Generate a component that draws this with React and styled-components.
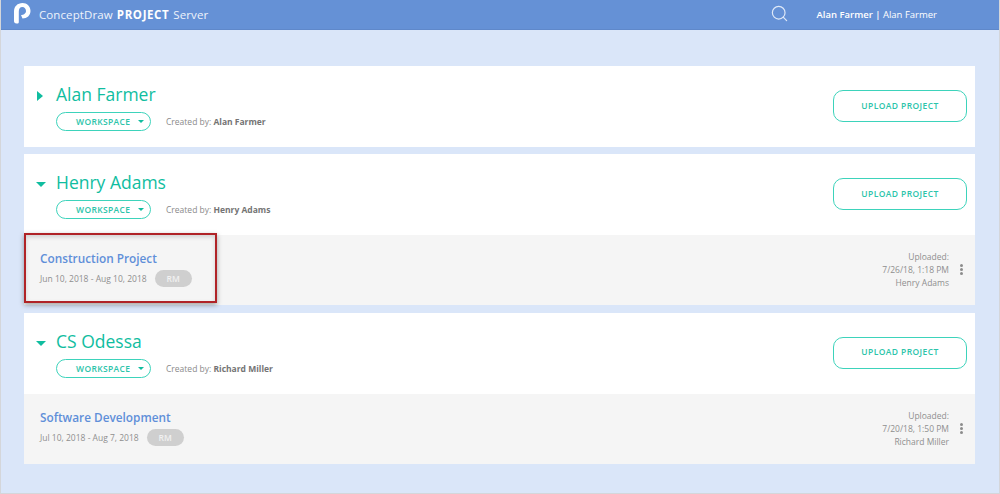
import React from 'react';
import styled, { createGlobalStyle } from 'styled-components';
import { Search } from 'lucide-react';

const Global = createGlobalStyle`
  html, body { margin: 0; padding: 0; }
  body { font-family: "Open Sans", sans-serif; background: #dae6f9; }
`;

const Page = styled.div`
  width: 1000px;
  height: 494px;
  box-sizing: border-box;
  border: 1px solid #d4d6da;
  border-top: 0;
  background: #dae6f9;
  overflow: hidden;
`;

const Header = styled.header`
  height: 30px;
  box-sizing: border-box;
  margin: 0 -1px;
  background: #6591d6;
  border-bottom: 1px solid #5f88ca;
  display: flex;
  align-items: center;
  color: #fff;
`;

const Logo = styled.svg`
  width: 18px;
  height: 22px;
  margin-left: 13px;
  margin-top: -3px;
`;

const Brand = styled.div`
  margin-left: 8px;
  font-size: 11.5px;
  letter-spacing: 0.1px;
  color: #eef3fb;
  b { font-weight: 700; letter-spacing: 0.6px; margin: 0 1px; color: #fff; }
`;

const SearchIcon = styled(Search)`
  margin-left: auto;
  margin-top: -3px;
  color: #dfe9f8;
`;

const UserName = styled.div`
  margin-left: 28px;
  margin-right: 63px;
  font-size: 9.5px;
  color: #fff;
  font-weight: 600;
  margin-top: -1px;
  white-space: pre;
  span { font-weight: 400; }
`;

const List = styled.main`
  position: relative;
  display: flex;
  flex-direction: column;
  gap: 7.4px;
  padding: 36px 24px 0 23px;
`;

const Card = styled.section`
  background: #fff;
`;

const CardHead = styled.div`
  height: 81px;
  box-sizing: border-box;
  display: flex;
  align-items: flex-start;
  padding: 16px 8px 0 12px;
`;

const Caret = styled.i`
  width: 0;
  height: 0;
  flex: none;
  margin-top: ${p => (p.$open ? '12px' : '9px')};
  margin-left: ${p => (p.$open ? '0' : '1px')};
  margin-right: ${p => (p.$open ? '10px' : '13px')};
  border-style: solid;
  ${p => (p.$open
    ? 'border-width: 5px 5px 0 5px; border-color: #10bd9f transparent transparent transparent;'
    : 'border-width: 5px 0 5px 6px; border-color: transparent transparent transparent #10bd9f;')}
`;

const HeadBody = styled.div`
  flex: 1;
`;

const Title = styled.h2`
  margin: -1px 0 1px;
  font-size: 17.5px;
  line-height: 26px;
  font-weight: 400;
  color: #10bd9f;
`;

const Meta = styled.div`
  display: flex;
  align-items: center;
  margin-top: 5px;
`;

const Workspace = styled.button`
  width: 95px;
  height: 19px;
  box-sizing: border-box;
  border: 1px solid #3dd3bb;
  border-radius: 10px;
  background: #fff;
  padding: 0 0 0 19px;
  display: flex;
  align-items: center;
  font-family: inherit;
  font-size: 8.5px;
  font-weight: 600;
  letter-spacing: 0.35px;
  color: #2cc4aa;
  &::after {
    content: "";
    margin-left: 8px;
    border-style: solid;
    border-width: 3px 3px 0 3px;
    border-color: #10bd9f transparent transparent transparent;
  }
`;

const CreatedBy = styled.div`
  margin-left: 15px;
  font-size: 8.5px;
  color: #8a8a8a;
  b { color: #747474; font-weight: 700; }
`;

const UploadButton = styled.button`
  width: 134px;
  height: 32px;
  margin-top: 8px;
  padding: 0 0 2px;
  box-sizing: border-box;
  border: 1px solid #3dd3bb;
  border-radius: 10px;
  background: #fff;
  font-family: inherit;
  font-size: 8.5px;
  font-weight: 600;
  letter-spacing: 0.4px;
  color: #2cc4aa;
`;

const ProjectRow = styled.div`
  height: 70px;
  box-sizing: border-box;
  background: #f5f5f5;
  display: flex;
  justify-content: space-between;
  padding: 15px 10px 0 16px;
`;

const ProjectName = styled.div`
  font-size: 11.8px;
  line-height: 17px;
  font-weight: 600;
  color: #5f8fd9;
`;

const Dates = styled.div`
  display: flex;
  align-items: center;
  margin-top: 3px;
  font-size: 8.5px;
  color: #8f8f8f;
`;

const Initials = styled.span`
  width: 37px;
  height: 17px;
  margin-left: 8px;
  border-radius: 9px;
  background: #cfcfcf;
  color: #f1f1f1;
  font-size: 8.5px;
  font-weight: 600;
  display: flex;
  align-items: center;
  justify-content: center;
`;

const UploadedInfo = styled.div`
  display: flex;
  align-items: center;
  font-size: 8.5px;
  line-height: 13px;
  text-align: right;
  color: #8f8f8f;
  height: 39px;
`;

const Dots = styled.span`
  display: flex;
  flex-direction: column;
  gap: 1px;
  margin-left: 11px;
  margin-right: 2px;
  i { width: 3px; height: 3px; border-radius: 50%; background: #8c8c8c; }
`;

const Highlight = styled.div`
  position: absolute;
  left: 23px;
  top: 203px;
  width: 193px;
  height: 70px;
  box-sizing: border-box;
  border: 2px solid #b02327;
  box-shadow: 0 2px 5px rgba(0, 0, 0, 0.35), inset 0 2px 4px rgba(0, 0, 0, 0.15);
  pointer-events: none;
`;

const workspaces = [
  { name: 'Alan Farmer', creator: 'Alan Farmer', open: false },
  {
    name: 'Henry Adams', creator: 'Henry Adams', open: true,
    project: { name: 'Construction Project', dates: 'Jun 10, 2018 - Aug 10, 2018', at: '7/26/18, 1:18 PM', by: 'Henry Adams' },
  },
  {
    name: 'CS Odessa', creator: 'Richard Miller', open: true,
    project: { name: 'Software Development', dates: 'Jul 10, 2018 - Aug 7, 2018', at: '7/20/18, 1:50 PM', by: 'Richard Miller' },
  },
];

export default function App() {
  return (
    <Page>
      <Global />
      <Header>
        <Logo viewBox="0 0 18 22">
          <path
            d="M1 19V9.5C1 4.5 4.5 1 9.5 1C14 1 17.5 4.5 17.5 9C17.5 13.5 14 16.5 9.5 16.5L8 13C10.5 13 13 11.5 13 9C13 6.8 11.5 5 9.3 5C7 5 5.8 6.8 5.8 9.5V20C5.8 21.5 4.8 21.8 3.5 21.5C1.8 21.2 1 20.5 1 19Z"
            fill="#fff"
          />
        </Logo>
        <Brand>ConceptDraw <b>PROJECT</b> Server</Brand>
        <SearchIcon size={19} strokeWidth={1.5} />
        <UserName>Alan Farmer | <span>Alan Farmer</span></UserName>
      </Header>
      <List>
        {workspaces.map(w => (
          <Card key={w.name}>
            <CardHead>
              <Caret $open={w.open} />
              <HeadBody>
                <Title>{w.name}</Title>
                <Meta>
                  <Workspace>WORKSPACE</Workspace>
                  <CreatedBy>Created by: <b>{w.creator}</b></CreatedBy>
                </Meta>
              </HeadBody>
              <UploadButton>UPLOAD PROJECT</UploadButton>
            </CardHead>
            {w.project && (
              <ProjectRow>
                <div>
                  <ProjectName>{w.project.name}</ProjectName>
                  <Dates>{w.project.dates}<Initials>RM</Initials></Dates>
                </div>
                <UploadedInfo>
                  <div>Uploaded:<br />{w.project.at}<br />{w.project.by}</div>
                  <Dots><i /><i /><i /></Dots>
                </UploadedInfo>
              </ProjectRow>
            )}
          </Card>
        ))}
        <Highlight />
      </List>
    </Page>
  );
}
